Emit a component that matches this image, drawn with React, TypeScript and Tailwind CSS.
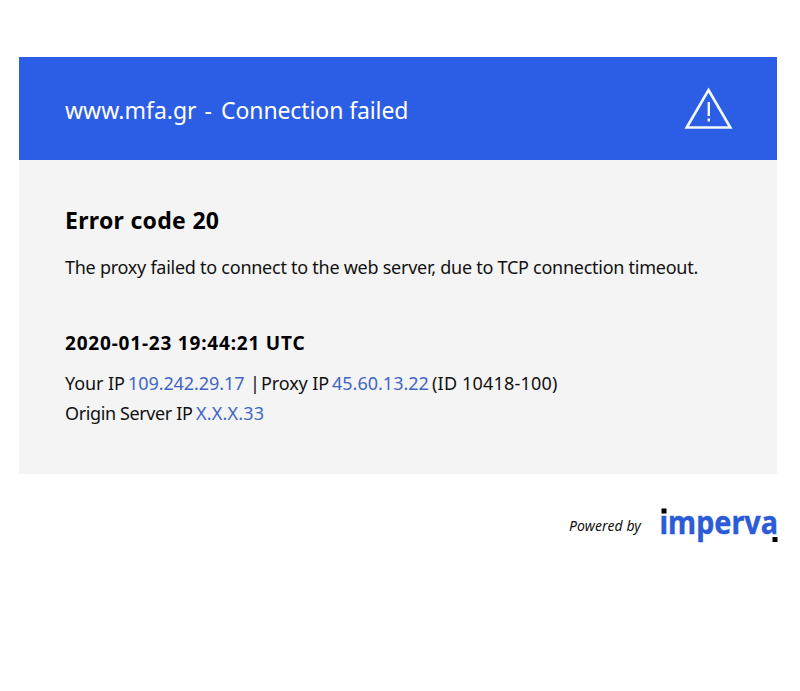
const WarningIcon = () => (
  <svg className="h-[44px] w-[50px]" viewBox="0 0 50 44" fill="none" stroke="#f4f8ff" strokeWidth="2.6">
    <path d="M24.5 3 L46.3 40.5 H2.7 Z" />
    <path d="M24.8 15 V29 M24.8 31.5 V34.5" strokeWidth="2.4" />
  </svg>
);

const ImpervaLogo = () => (
  <svg className="h-[50px] w-[122px] overflow-visible" viewBox="0 -10 122 50">
    <text
      x="1.5"
      y="28.3"
      textLength="118.5"
      lengthAdjust="spacingAndGlyphs"
      className="fill-[#2b5bd7] stroke-[#2b5bd7] stroke-[0.4px] font-['Noto_Sans',sans-serif] text-[33px] font-bold"
    >
      imperva
    </text>
    <rect x="1" y="0" width="10" height="9.2" fill="white" />
    <rect x="3.5" y="2.5" width="5" height="5" fill="black" />
    <rect x="114.5" y="31" width="5" height="5" fill="black" />
  </svg>
);

const App = () => {
  return (
    <div className="min-h-[691px] bg-white pt-[57px] pl-[19px] font-['Noto_Sans',sans-serif] text-[#111]">
      <div className="w-[758px]">
        <header className="flex h-[103px] items-center justify-between bg-[#2c5de5] pr-[43px] pl-[46px] text-white">
          <h1 className="flex gap-[8px] pt-[4px] text-[23px] whitespace-nowrap">
            <span>www.mfa.gr</span>
            <span>-</span>
            <span className="pl-px tracking-[-0.1px]">Connection failed</span>
          </h1>
          <WarningIcon />
        </header>
        <main className="h-[314px] bg-[#f4f4f4] pt-[43px] pl-[46px]">
          <h2 className="text-[23px] leading-[34px] font-bold tracking-[0.3px] text-black">Error code 20</h2>
          <p className="mt-[15px] text-[18px] leading-[30px] tracking-[-0.26px] whitespace-nowrap">
            The proxy failed to connect to the web server, due to TCP connection timeout.
          </p>
          <h3 className="mt-[46px] text-[19px] leading-[30px] font-bold tracking-[0.8px] text-black">2020-01-23 19:44:21 UTC</h3>
          <div className="mt-[10px] text-[18px] leading-[30px] whitespace-nowrap">
            <p className="flex">
              <span className="w-[63px] tracking-[-0.1px]">Your IP</span>
              <span className="w-[122px] tracking-[-0.08px] text-[#3f66c4]">109.242.29.17</span>
              <span className="w-[11px]">|</span>
              <span className="w-[71px] tracking-[-0.1px]">Proxy IP</span>
              <span className="w-[100px] text-[#3f66c4]">45.60.13.22</span>
              <span className="tracking-[0.2px]">(ID 10418-100)</span>
            </p>
            <p className="flex">
              <span className="w-[131px] tracking-[-0.38px]">Origin Server IP</span>
              <span className="tracking-[0.2px] text-[#3f66c4]">X.X.X.33</span>
            </p>
          </div>
        </main>
        <footer className="flex justify-end pt-[22px]">
          <span className="mt-[20px] mr-[17px] text-[14px] leading-[20px] tracking-[0.1px] italic">Powered by</span>
          <div className="-mr-[3px]">
            <ImpervaLogo />
          </div>
        </footer>
      </div>
    </div>
  );
};

export default App;
